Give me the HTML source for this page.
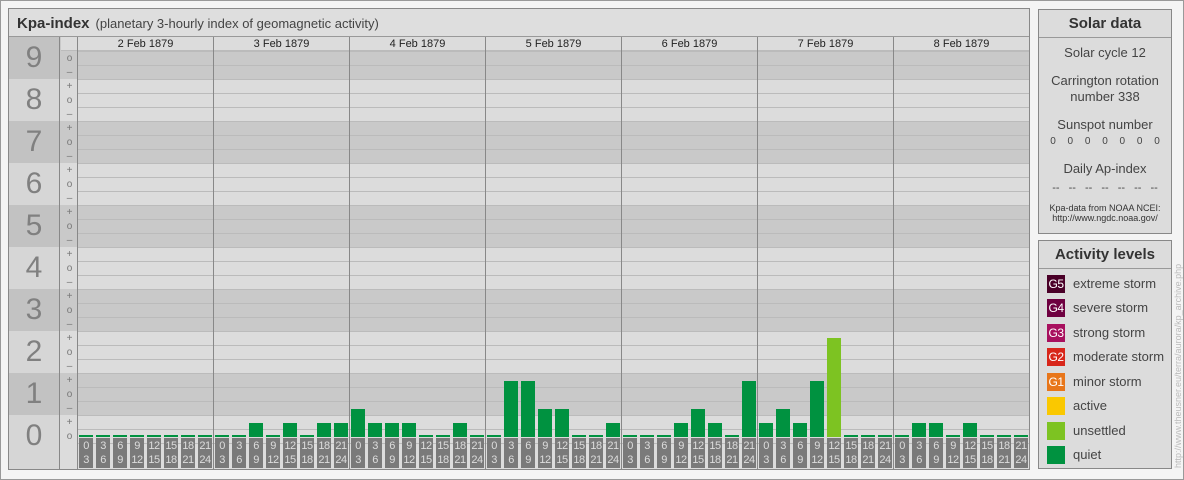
<!DOCTYPE html>
<html><head><meta charset="utf-8"><style>
*{margin:0;padding:0;box-sizing:border-box}
body{width:1184px;height:480px;background:#f4f4f4;position:relative;overflow:hidden;font-family:"Liberation Sans",sans-serif;color:#333}
.frame{position:absolute;left:0;top:0;width:1184px;height:480px;border:1px solid #999}
.main{position:absolute;left:8px;top:8px;width:1022px;height:462px;border:1px solid #888;background:#dcdcdc}
.title{position:absolute;left:0;top:0;width:1020px;height:28px;border-bottom:1px solid #999;background:#dedede;font-size:14px;line-height:28px;padding-left:8px}
.title b{font-size:15px;color:#333}
.title span{font-size:13px;color:#444;margin-left:6px}
.a{position:absolute}
.band{position:absolute;left:0;width:1020px;height:42px}
.dk{background:#c9c9c9}.lt{background:#dcdcdc}
.num{position:absolute;left:0;width:51px;height:42px;font-size:30px;color:#808080;text-align:center;line-height:42px;border-right:1px solid #888}
.ndk{background:#c2c2c2}.nlt{background:#d6d6d6}
.grid{position:absolute;left:68px;top:42px;width:952px;height:393px;background:repeating-linear-gradient(to bottom,#bbb 0,#bbb 1px,transparent 1px,transparent 14px)}
.sign{position:absolute;left:52px;width:17px;height:14px;font-size:10px;color:#777;text-align:center;line-height:14px}
.day{position:absolute;top:28px;width:136px;height:432px;border-left:1px solid #888}
.dh{height:14px;font-size:11px;line-height:14px;text-align:center;color:#222;background:#dcdcdc;border-bottom:1px solid #bbb}
.bars{position:absolute;left:0;top:300px;height:100px;width:136px;display:flex;align-items:flex-end}
.bars i{display:block;width:14px;margin-left:1px;margin-right:2px;background:#009240}
.labs{position:absolute;left:0;top:401px;height:30px;width:136px;display:flex}
.labs i{display:block;width:14px;height:30px;margin-left:1px;margin-right:2px;background:#7a7a7a;color:#ddd;font-style:normal;font-size:11px;line-height:14px;text-align:center;padding-top:1px;letter-spacing:-0.5px}
.side{position:absolute;left:1038px;width:134px;border:1px solid #888;background:#dcdcdc}
.st{height:28px;border-bottom:1px solid #999;text-align:center;font-weight:bold;font-size:15px;line-height:28px;color:#333}
.sd{text-align:center;font-size:13px;color:#444}
.lv{position:absolute;left:8px;font-size:13px;color:#444;height:18px;line-height:18px}
.lv i{display:inline-block;width:18px;height:18px;vertical-align:top;color:#fff;font-style:normal;font-size:12px;text-align:center;margin-right:8px;letter-spacing:-0.5px}
</style></head><body>
<div class="frame"></div>
<div class="main">
<div class="title"><b>Kpa-index</b><span>(planetary 3-hourly index of geomagnetic activity)</span></div>
<div class="band dk" style="top:28px"></div>
<div class="band lt" style="top:70px"></div>
<div class="band dk" style="top:112px"></div>
<div class="band lt" style="top:154px"></div>
<div class="band dk" style="top:196px"></div>
<div class="band lt" style="top:238px"></div>
<div class="band dk" style="top:280px"></div>
<div class="band lt" style="top:322px"></div>
<div class="band dk" style="top:364px"></div>
<div class="band lt" style="top:406px;height:54px"></div>
<div class="grid"></div>
<div class="num ndk" style="top:28px">9</div>
<div class="num nlt" style="top:70px">8</div>
<div class="num ndk" style="top:112px">7</div>
<div class="num nlt" style="top:154px">6</div>
<div class="num ndk" style="top:196px">5</div>
<div class="num nlt" style="top:238px">4</div>
<div class="num ndk" style="top:280px">3</div>
<div class="num nlt" style="top:322px">2</div>
<div class="num ndk" style="top:364px">1</div>
<div class="num nlt" style="top:406px;height:54px;line-height:42px">0</div>
<div class="a" style="left:68px;top:28px;width:1px;height:432px;background:#888"></div>
<div class="a" style="left:52px;top:28px;width:16px;height:14px;background:#dcdcdc;border-bottom:1px solid #bbb"></div>
<div class="sign" style="top:43px">o</div><div class="sign" style="top:57px">–</div>
<div class="sign" style="top:71px">+</div><div class="sign" style="top:85px">o</div><div class="sign" style="top:99px">–</div>
<div class="sign" style="top:113px">+</div><div class="sign" style="top:127px">o</div><div class="sign" style="top:141px">–</div>
<div class="sign" style="top:155px">+</div><div class="sign" style="top:169px">o</div><div class="sign" style="top:183px">–</div>
<div class="sign" style="top:197px">+</div><div class="sign" style="top:211px">o</div><div class="sign" style="top:225px">–</div>
<div class="sign" style="top:239px">+</div><div class="sign" style="top:253px">o</div><div class="sign" style="top:267px">–</div>
<div class="sign" style="top:281px">+</div><div class="sign" style="top:295px">o</div><div class="sign" style="top:309px">–</div>
<div class="sign" style="top:323px">+</div><div class="sign" style="top:337px">o</div><div class="sign" style="top:351px">–</div>
<div class="sign" style="top:365px">+</div><div class="sign" style="top:379px">o</div><div class="sign" style="top:393px">–</div>
<div class="sign" style="top:407px">+</div><div class="sign" style="top:421px">o</div>

<div class="day" style="left:68px"><div class="dh">2 Feb 1879</div>
<div class="bars"><i style="height:2px"></i><i style="height:2px"></i><i style="height:2px"></i><i style="height:2px"></i><i style="height:2px"></i><i style="height:2px"></i><i style="height:2px"></i><i style="height:2px"></i></div>
<div class="labs"><i>0<br>3</i><i>3<br>6</i><i>6<br>9</i><i>9<br>12</i><i>12<br>15</i><i>15<br>18</i><i>18<br>21</i><i>21<br>24</i></div></div>

<div class="day" style="left:204px"><div class="dh">3 Feb 1879</div>
<div class="bars"><i style="height:2px"></i><i style="height:2px"></i><i style="height:14px"></i><i style="height:2px"></i><i style="height:14px"></i><i style="height:2px"></i><i style="height:14px"></i><i style="height:14px"></i></div>
<div class="labs"><i>0<br>3</i><i>3<br>6</i><i>6<br>9</i><i>9<br>12</i><i>12<br>15</i><i>15<br>18</i><i>18<br>21</i><i>21<br>24</i></div></div>

<div class="day" style="left:340px"><div class="dh">4 Feb 1879</div>
<div class="bars"><i style="height:28px"></i><i style="height:14px"></i><i style="height:14px"></i><i style="height:14px"></i><i style="height:2px"></i><i style="height:2px"></i><i style="height:14px"></i><i style="height:2px"></i></div>
<div class="labs"><i>0<br>3</i><i>3<br>6</i><i>6<br>9</i><i>9<br>12</i><i>12<br>15</i><i>15<br>18</i><i>18<br>21</i><i>21<br>24</i></div></div>

<div class="day" style="left:476px"><div class="dh">5 Feb 1879</div>
<div class="bars"><i style="height:2px"></i><i style="height:56px"></i><i style="height:56px"></i><i style="height:28px"></i><i style="height:28px"></i><i style="height:2px"></i><i style="height:2px"></i><i style="height:14px"></i></div>
<div class="labs"><i>0<br>3</i><i>3<br>6</i><i>6<br>9</i><i>9<br>12</i><i>12<br>15</i><i>15<br>18</i><i>18<br>21</i><i>21<br>24</i></div></div>

<div class="day" style="left:612px"><div class="dh">6 Feb 1879</div>
<div class="bars"><i style="height:2px"></i><i style="height:2px"></i><i style="height:2px"></i><i style="height:14px"></i><i style="height:28px"></i><i style="height:14px"></i><i style="height:2px"></i><i style="height:56px"></i></div>
<div class="labs"><i>0<br>3</i><i>3<br>6</i><i>6<br>9</i><i>9<br>12</i><i>12<br>15</i><i>15<br>18</i><i>18<br>21</i><i>21<br>24</i></div></div>

<div class="day" style="left:748px"><div class="dh">7 Feb 1879</div>
<div class="bars"><i style="height:14px"></i><i style="height:28px"></i><i style="height:14px"></i><i style="height:56px"></i><i style="height:99px;background:#7dc322"></i><i style="height:2px"></i><i style="height:2px"></i><i style="height:2px"></i></div>
<div class="labs"><i>0<br>3</i><i>3<br>6</i><i>6<br>9</i><i>9<br>12</i><i>12<br>15</i><i>15<br>18</i><i>18<br>21</i><i>21<br>24</i></div></div>

<div class="day" style="left:884px"><div class="dh">8 Feb 1879</div>
<div class="bars"><i style="height:2px"></i><i style="height:14px"></i><i style="height:14px"></i><i style="height:2px"></i><i style="height:14px"></i><i style="height:2px"></i><i style="height:2px"></i><i style="height:2px"></i></div>
<div class="labs"><i>0<br>3</i><i>3<br>6</i><i>6<br>9</i><i>9<br>12</i><i>12<br>15</i><i>15<br>18</i><i>18<br>21</i><i>21<br>24</i></div></div>
</div>

<div class="side" style="top:9px;height:225px">
<div class="st">Solar data</div>
<div class="sd" style="margin-top:7px">Solar cycle 12</div>
<div class="sd" style="margin-top:13px;line-height:16px">Carrington rotation<br>number 338</div>
<div class="sd" style="margin-top:12px">Sunspot number</div>
<div class="sd" style="margin-top:4px;font-size:10px;word-spacing:9px">0 0 0 0 0 0 0</div>
<div class="sd" style="margin-top:14px">Daily Ap-index</div>
<div class="sd" style="margin-top:6px;font-size:11px;word-spacing:6px">-- -- -- -- -- -- --</div>
<div class="sd" style="margin-top:9px;font-size:9px;line-height:10px;color:#333">Kpa-data from NOAA NCEI:<br>http://www.ngdc.noaa.gov/</div>
</div>

<div class="side" style="top:240px;height:229px">
<div class="st">Activity levels</div>
<div class="lv" style="top:34px"><i style="background:#4a0028">G5</i>extreme storm</div>
<div class="lv" style="top:58px"><i style="background:#6e0040">G4</i>severe storm</div>
<div class="lv" style="top:83px"><i style="background:#a8105e">G3</i>strong storm</div>
<div class="lv" style="top:107px"><i style="background:#d8261a">G2</i>moderate storm</div>
<div class="lv" style="top:132px"><i style="background:#e8761a">G1</i>minor storm</div>
<div class="lv" style="top:156px"><i style="background:#fac800"></i>active</div>
<div class="lv" style="top:181px"><i style="background:#7dc322"></i>unsettled</div>
<div class="lv" style="top:205px"><i style="background:#009240"></i>quiet</div>
</div>

<div class="a" style="left:1172px;top:468px;transform:rotate(-90deg);transform-origin:0 0;font-size:9px;color:#bbb;white-space:nowrap;width:230px;line-height:12px">http://www.theusner.eu/terra/aurora/kp_archive.php</div>
</body></html>
